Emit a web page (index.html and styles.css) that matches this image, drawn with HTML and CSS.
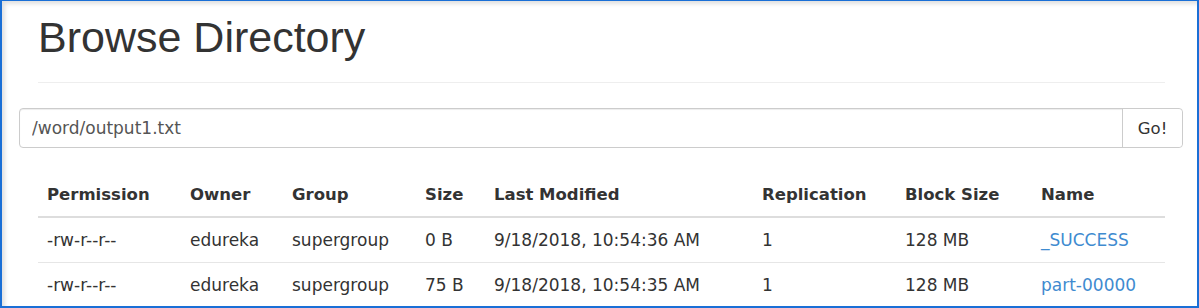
FILE: index.html
```html
<!DOCTYPE html>
<html>
<head>
<meta charset="utf-8">
<link rel="stylesheet" href="styles.css">
</head>
<body>
<div class="frame">
  <div class="container">
    <div class="page-header">
      <h1>Browse Directory</h1>
    </div>
  </div>
  <div class="input-group">
    <input class="path-input" type="text" value="/word/output1.txt">
    <button class="go-btn">Go!</button>
  </div>
  <div class="container">
    <table class="listing">
      <thead>
        <tr>
          <th class="c-perm">Permission</th>
          <th class="c-owner">Owner</th>
          <th class="c-group">Group</th>
          <th class="c-size">Size</th>
          <th class="c-mod">Last Modified</th>
          <th class="c-rep">Replication</th>
          <th class="c-block">Block Size</th>
          <th class="c-name">Name</th>
        </tr>
      </thead>
      <tbody>
        <tr>
          <td>-rw-r--r--</td>
          <td>edureka</td>
          <td>supergroup</td>
          <td>0 B</td>
          <td>9/18/2018, 10:54:36 AM</td>
          <td>1</td>
          <td>128 MB</td>
          <td><a href="#">_SUCCESS</a></td>
        </tr>
        <tr>
          <td>-rw-r--r--</td>
          <td>edureka</td>
          <td>supergroup</td>
          <td>75 B</td>
          <td>9/18/2018, 10:54:35 AM</td>
          <td>1</td>
          <td>128 MB</td>
          <td><a href="#">part-00000</a></td>
        </tr>
      </tbody>
    </table>
  </div>
</div>
</body>
</html>
```
FILE: styles.css
```css
html, body {
  margin: 0;
  padding: 0;
  background: #fff;
}
body {
  font-family: "DejaVu Sans", sans-serif;
  font-size: 16.5px;
  color: #333;
}
.frame {
  box-sizing: border-box;
  width: 1199px;
  height: 308px;
  overflow: hidden;
  border-top: 1px solid #1a6fd6;
  border-left: 2px solid #1a6fd6;
  border-right: 2px solid #1a6fd6;
  border-bottom: 2px solid #1a6fd6;
  box-shadow: inset 4px 4px 4px -1px rgba(0, 0, 0, 0.12);
  background: #fff;
}
.container {
  margin: 0 32px 0 36px;
}
.page-header {
  padding-top: 13px;
  padding-bottom: 22px;
  border-bottom: 1px solid #eee;
}
.page-header h1 {
  margin: 0;
  font-family: "Liberation Sans", Arial, sans-serif;
  font-size: 43px;
  font-weight: 500;
  line-height: 46px;
  color: #333;
}
.input-group {
  display: flex;
  margin: 25px 14px 0 17px;
  height: 40px;
  box-sizing: border-box;
  border: 1px solid #ccc;
  border-radius: 4px;
  box-shadow: inset 0 1px 1px rgba(0, 0, 0, 0.075);
}
.path-input {
  flex: 1;
  border: 0;
  outline: none;
  background: transparent;
  padding: 0 12px;
  font-family: "DejaVu Sans", sans-serif;
  font-size: 17px;
  color: #555;
}
.go-btn {
  width: 60px;
  border: 0;
  border-left: 1px solid #ccc;
  background: #fff;
  border-radius: 0 4px 4px 0;
  font-family: "DejaVu Sans", sans-serif;
  font-size: 16.5px;
  color: #333;
  padding: 0;
}
.listing {
  width: 100%;
  border-collapse: collapse;
  margin-top: 25px;
}
.listing th,
.listing td {
  text-align: left;
  padding: 10px 9px;
  line-height: 23px;
  white-space: nowrap;
}
.listing td {
  font-size: 17px;
  padding: 11px 9px 10px;
  border-top: 1px solid #e6e6e6;
}
.listing th {
  font-weight: bold;
  border-bottom: 2px solid #ddd;
}
.listing tbody tr:first-child td {
  border-top: 0;
}
.c-perm { width: 125px; }
.c-owner { width: 84px; }
.c-group { width: 115px; }
.c-size { width: 51px; }
.c-mod { width: 250px; }
.c-rep { width: 125px; }
.c-block { width: 118px; }
.listing a {
  color: #3f8bd0;
  text-decoration: none;
}
```
